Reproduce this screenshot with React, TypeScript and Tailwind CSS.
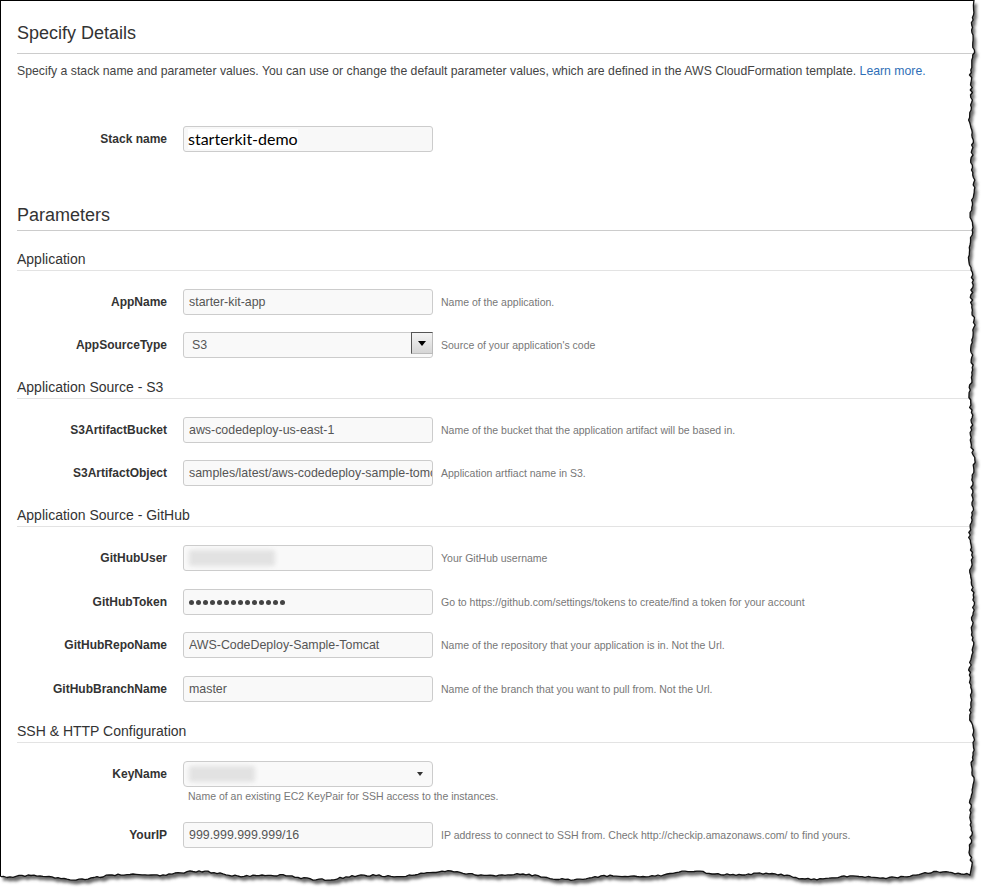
import React from "react";

type Pt = [number, number];

function makeEdge() {
  let s = 987654;
  const r = () => {
    s = (s * 16807) % 2147483647;
    return s / 2147483647;
  };
  const right: Pt[] = [];
  for (let y = 0; y <= 867; y += 2.5) {
    const x =
      971.8 + 1.4 * Math.sin(y / 23) + 1.0 * Math.sin(y / 7.3 + 1) + (r() - 0.5) * 2.4;
    right.push([x, y]);
  }
  right[0] = [974, 0];
  const bottom: Pt[] = [];
  for (let x = 970; x >= 0; x -= 3) {
    const y =
      875.5 + 2.6 * Math.sin(x / 41) + 1.6 * Math.sin(x / 13 + 2) + (r() - 0.5) * 1.8;
    bottom.push([x, y]);
  }
  return { right, bottom };
}

const edge = makeEdge();
const edgePts = [...edge.right, ...edge.bottom];
const edgeStr = edgePts.map((p) => `${p[0].toFixed(1)},${p[1].toFixed(1)}`).join(" ");
const lastY = edge.bottom[edge.bottom.length - 1][1];
const paperStr = `0,0 ${edgeStr} 0,${lastY.toFixed(1)}`;
const outsidePath = `M 974 -2 L ${edgePts
  .map((p) => `${p[0].toFixed(1)} ${p[1].toFixed(1)}`)
  .join(" L ")} L -2 ${lastY.toFixed(1)} L -2 894 L 990 894 L 990 -2 Z`;

function TornEdge() {
  return (
    <svg
      className="absolute left-0 top-0 pointer-events-none"
      width={987}
      height={892}
      viewBox="0 0 987 892"
    >
      <defs>
        <clipPath id="outside">
          <path d={outsidePath} />
        </clipPath>
        <filter id="blur" x="-5%" y="-5%" width="110%" height="110%">
          <feGaussianBlur stdDeviation="1.6" />
        </filter>
      </defs>
      <path d={outsidePath} fill="#ffffff" />
      <g clipPath="url(#outside)">
        <polygon points={paperStr} transform="translate(3,4)" fill="#6a6a6a" filter="url(#blur)" />
      </g>
      <polyline points={edgeStr} fill="none" stroke="#111" strokeWidth={1.3} strokeLinejoin="round" />
    </svg>
  );
}

function Box({ children }: { children: React.ReactNode }) {
  return (
    <div className="ml-4 w-[250px] h-[26px] shrink-0 border border-[#cccccc] rounded-[3px] bg-[#f9f9f9] flex items-center pl-[5px] overflow-hidden">
      {children}
    </div>
  );
}

function TextValue({ value }: { value: string }) {
  return (
    <input
      readOnly
      value={value}
      className="w-full min-w-0 bg-transparent outline-none border-0 p-0 text-[12.4px] text-[#555] font-['Liberation_Sans',Arial,sans-serif]"
    />
  );
}

function Label({ children }: { children: React.ReactNode }) {
  return (
    <div className="w-[150px] shrink-0 text-right font-bold text-[12px] leading-[26px] text-[#333]">
      {children}
    </div>
  );
}

function Help({ children }: { children: React.ReactNode }) {
  return (
    <div className="ml-2 text-[10.5px] leading-[26px] text-[#777] whitespace-nowrap">{children}</div>
  );
}

function Row({
  label,
  help,
  children,
  className,
}: {
  label: string;
  help?: string;
  children: React.ReactNode;
  className: string;
}) {
  return (
    <div className={`flex items-start ${className}`}>
      <Label>{label}</Label>
      <Box>{children}</Box>
      {help ? <Help>{help}</Help> : null}
    </div>
  );
}

function SubHeader({ title, className }: { title: string; className: string }) {
  return (
    <div className={`pt-px pb-[2px] border-b border-[#e3e3e3] ${className}`}>
      <h3 className="text-[14px] leading-[18px] text-[#333]">{title}</h3>
    </div>
  );
}

function BlurBlob({ w }: { w: string }) {
  return <div className={`h-[16px] ${w} bg-[#e2e2e2] rounded-[3px] blur-[2px]`} />;
}

export default function App() {
  return (
    <div className="relative w-[987px] h-[892px] bg-white overflow-hidden font-['Liberation_Sans',Arial,sans-serif]">
      <div className="absolute left-0 top-0 w-[987px] h-[892px] border-l border-t border-black pl-4 flex flex-col">
        {/* Specify Details */}
        <div className="pt-[21px] pb-[9px] border-b border-[#cccccc]">
          <h2 className="text-[18px] leading-[22px] text-[#333]">Specify Details</h2>
        </div>
        <p className="mt-[9px] text-[12.25px] leading-[16px] text-[#444] whitespace-nowrap">
          Specify a stack name and parameter values. You can use or change the default parameter values, which are
          defined in the AWS CloudFormation template.{" "}
          <span className="text-[#2f6fb7]">Learn more.</span>
        </p>

        <div className="flex items-start mt-[47px]">
          <Label>Stack name</Label>
          <div className="ml-4 w-[250px] h-[26px] shrink-0 border border-[#cccccc] rounded-[3px] bg-[#f8f8f8] flex items-center pl-[4px]">
            <span className="bg-white text-[16px] leading-[20px] text-black font-['Lato',sans-serif]">
              starterkit-demo
            </span>
          </div>
        </div>

        {/* Parameters */}
        <div className="mt-[52px] pb-[4px] border-b border-[#cccccc]">
          <h2 className="text-[18px] leading-[22px] text-[#333]">Parameters</h2>
        </div>

        <SubHeader title="Application" className="mt-[18px]" />
        <Row className="mt-[18px]" label="AppName" help="Name of the application.">
          <TextValue value="starter-kit-app" />
        </Row>
        <div className="flex items-start mt-[17px]">
          <Label>AppSourceType</Label>
          <div className="ml-4 w-[250px] h-[26px] shrink-0 border border-[#cccccc] rounded-[3px] bg-[#f9f9f9] flex items-start text-[12.4px] text-[#555]">
            <span className="flex-1 pl-[8px] leading-[24px]">S3</span>
            <div className="w-[22px] h-[22px] mt-[-1px] mr-[-1px] border-l border-t border-[#555] border-r border-b border-r-[#bbb] border-b-[#bbb] bg-gradient-to-b from-[#f4f4f4] to-[#d6d6d6] flex items-center justify-center">
              <div className="w-0 h-0 border-l-[4px] border-r-[4px] border-t-[5px] border-l-transparent border-r-transparent border-t-black" />
            </div>
          </div>
          <Help>Source of your application's code</Help>
        </div>

        <SubHeader title="Application Source - S3" className="mt-[19px]" />
        <Row className="mt-[18px]" label="S3ArtifactBucket" help="Name of the bucket that the application artifact will be based in.">
          <TextValue value="aws-codedeploy-us-east-1" />
        </Row>
        <Row className="mt-[17px]" label="S3ArtifactObject" help="Application artfiact name in S3.">
          <TextValue value="samples/latest/aws-codedeploy-sample-tomcat.zip" />
        </Row>

        <SubHeader title="Application Source - GitHub" className="mt-[19px]" />
        <Row className="mt-[18px]" label="GitHubUser" help="Your GitHub username">
          <BlurBlob w="w-[86px]" />
        </Row>
        <Row className="mt-[18px]" label="GitHubToken" help="Go to https://github.com/settings/tokens to create/find a token for your account">
          <div className="flex gap-[2px]">
            {Array.from({ length: 14 }).map((_, i) => (
              <div key={i} className="w-[5px] h-[5px] rounded-full bg-[#444]" />
            ))}
          </div>
        </Row>
        <Row className="mt-[17px]" label="GitHubRepoName" help="Name of the repository that your application is in. Not the Url.">
          <TextValue value="AWS-CodeDeploy-Sample-Tomcat" />
        </Row>
        <Row className="mt-[18px]" label="GitHubBranchName" help="Name of the branch that you want to pull from. Not the Url.">
          <TextValue value="master" />
        </Row>

        <SubHeader title="SSH & HTTP Configuration" className="mt-[19px]" />
        <div className="flex items-start mt-[18px]">
          <Label>KeyName</Label>
          <div className="ml-4 flex flex-col">
            <div className="w-[250px] h-[26px] border border-[#cccccc] rounded-[4px] bg-[#f9f9f9] flex items-center pl-[5px] pr-[9px]">
              <div className="flex-1">
                <BlurBlob w="w-[66px]" />
              </div>
              <div className="w-0 h-0 border-l-[3px] border-r-[3px] border-t-[4px] border-l-transparent border-r-transparent border-t-[#333]" />
            </div>
            <div className="mt-[2px] pl-[5px] text-[10.5px] leading-[14px] text-[#777] whitespace-nowrap">
              Name of an existing EC2 KeyPair for SSH access to the instances.
            </div>
          </div>
        </div>
        <Row className="mt-[19px]" label="YourIP" help="IP address to connect to SSH from. Check http://checkip.amazonaws.com/ to find yours.">
          <TextValue value="999.999.999.999/16" />
        </Row>
      </div>
      <TornEdge />
    </div>
  );
}
